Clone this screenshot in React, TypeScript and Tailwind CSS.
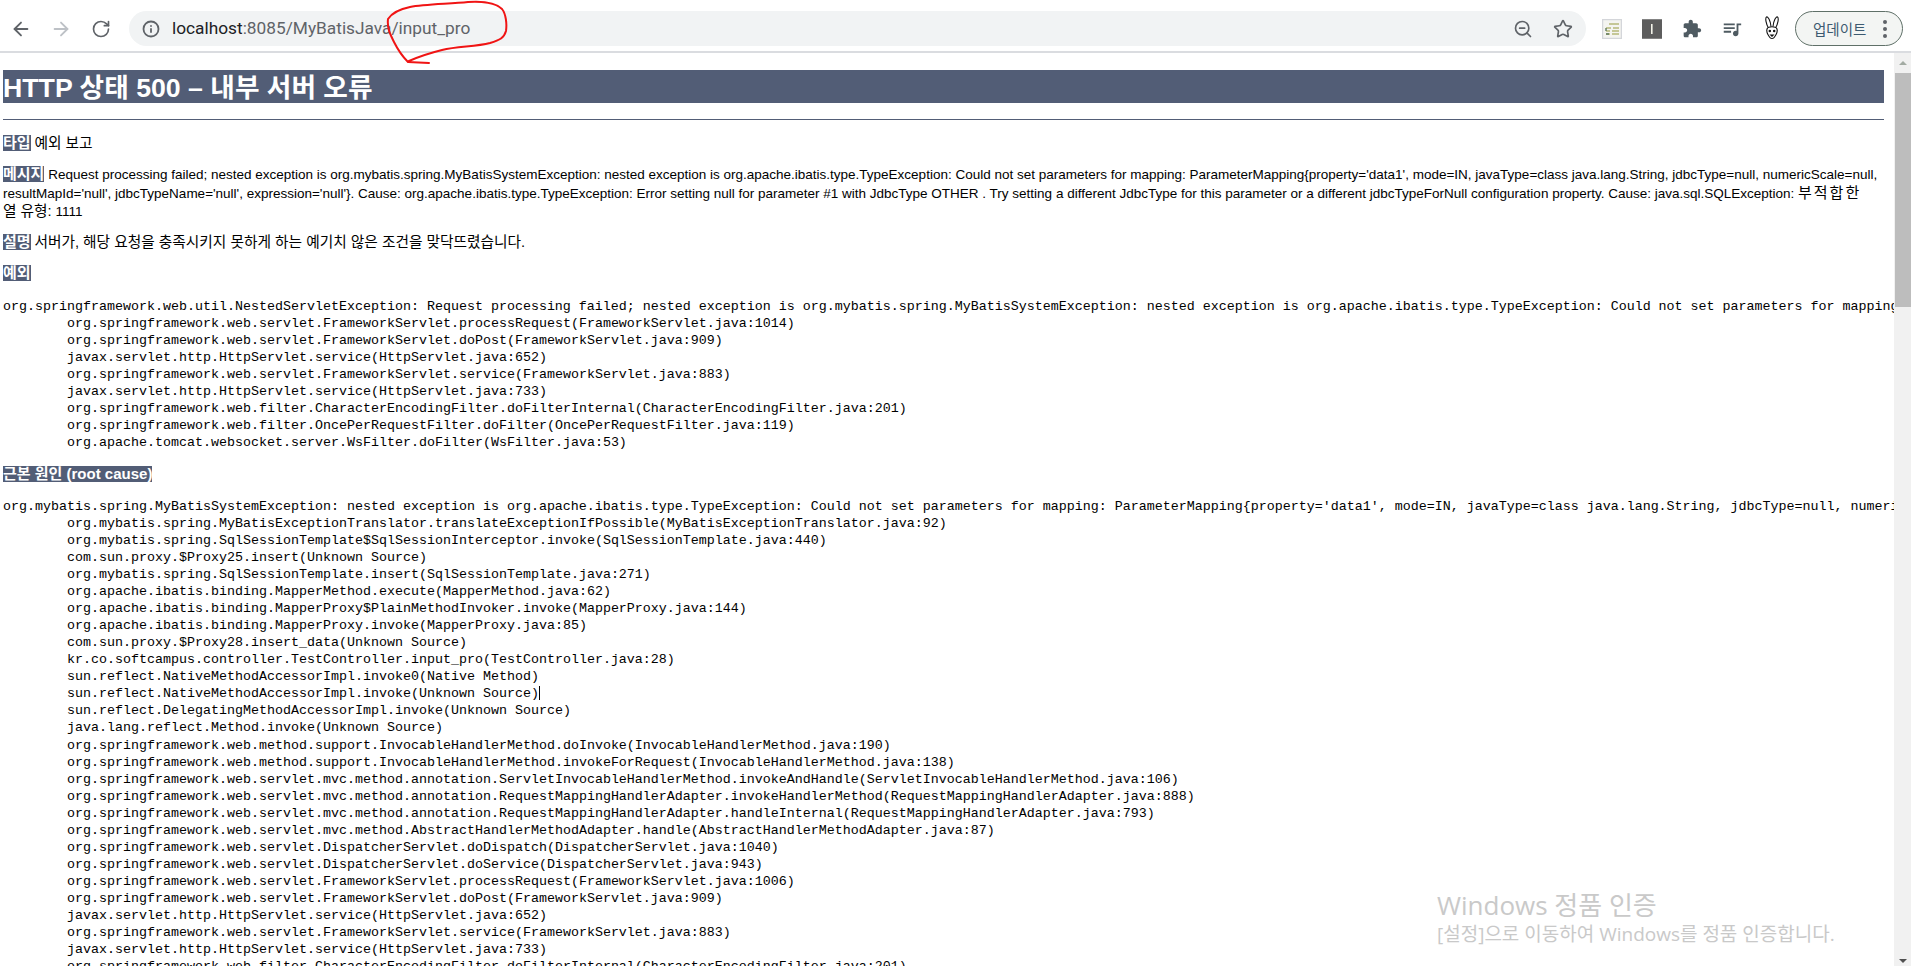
import React from 'react';
import { ArrowLeft, ArrowRight, Info, RotateCw, Star, ZoomOut } from 'lucide-react';

const TRACE_ONE = [
  'org.springframework.web.servlet.FrameworkServlet.processRequest(FrameworkServlet.java:1014)',
  'org.springframework.web.servlet.FrameworkServlet.doPost(FrameworkServlet.java:909)',
  'javax.servlet.http.HttpServlet.service(HttpServlet.java:652)',
  'org.springframework.web.servlet.FrameworkServlet.service(FrameworkServlet.java:883)',
  'javax.servlet.http.HttpServlet.service(HttpServlet.java:733)',
  'org.springframework.web.filter.CharacterEncodingFilter.doFilterInternal(CharacterEncodingFilter.java:201)',
  'org.springframework.web.filter.OncePerRequestFilter.doFilter(OncePerRequestFilter.java:119)',
  'org.apache.tomcat.websocket.server.WsFilter.doFilter(WsFilter.java:53)',
];

const TRACE_TWO = [
  'org.mybatis.spring.MyBatisExceptionTranslator.translateExceptionIfPossible(MyBatisExceptionTranslator.java:92)',
  'org.mybatis.spring.SqlSessionTemplate$SqlSessionInterceptor.invoke(SqlSessionTemplate.java:440)',
  'com.sun.proxy.$Proxy25.insert(Unknown Source)',
  'org.mybatis.spring.SqlSessionTemplate.insert(SqlSessionTemplate.java:271)',
  'org.apache.ibatis.binding.MapperMethod.execute(MapperMethod.java:62)',
  'org.apache.ibatis.binding.MapperProxy$PlainMethodInvoker.invoke(MapperProxy.java:144)',
  'org.apache.ibatis.binding.MapperProxy.invoke(MapperProxy.java:85)',
  'com.sun.proxy.$Proxy28.insert_data(Unknown Source)',
  'kr.co.softcampus.controller.TestController.input_pro(TestController.java:28)',
  'sun.reflect.NativeMethodAccessorImpl.invoke0(Native Method)',
  'sun.reflect.NativeMethodAccessorImpl.invoke(Unknown Source)',
  'sun.reflect.DelegatingMethodAccessorImpl.invoke(Unknown Source)',
  'java.lang.reflect.Method.invoke(Unknown Source)',
  'org.springframework.web.method.support.InvocableHandlerMethod.doInvoke(InvocableHandlerMethod.java:190)',
  'org.springframework.web.method.support.InvocableHandlerMethod.invokeForRequest(InvocableHandlerMethod.java:138)',
  'org.springframework.web.servlet.mvc.method.annotation.ServletInvocableHandlerMethod.invokeAndHandle(ServletInvocableHandlerMethod.java:106)',
  'org.springframework.web.servlet.mvc.method.annotation.RequestMappingHandlerAdapter.invokeHandlerMethod(RequestMappingHandlerAdapter.java:888)',
  'org.springframework.web.servlet.mvc.method.annotation.RequestMappingHandlerAdapter.handleInternal(RequestMappingHandlerAdapter.java:793)',
  'org.springframework.web.servlet.mvc.method.AbstractHandlerMethodAdapter.handle(AbstractHandlerMethodAdapter.java:87)',
  'org.springframework.web.servlet.DispatcherServlet.doDispatch(DispatcherServlet.java:1040)',
  'org.springframework.web.servlet.DispatcherServlet.doService(DispatcherServlet.java:943)',
  'org.springframework.web.servlet.FrameworkServlet.processRequest(FrameworkServlet.java:1006)',
  'org.springframework.web.servlet.FrameworkServlet.doPost(FrameworkServlet.java:909)',
  'javax.servlet.http.HttpServlet.service(HttpServlet.java:652)',
  'org.springframework.web.servlet.FrameworkServlet.service(FrameworkServlet.java:883)',
  'javax.servlet.http.HttpServlet.service(HttpServlet.java:733)',
  'org.springframework.web.filter.CharacterEncodingFilter.doFilterInternal(CharacterEncodingFilter.java:201)',
];

// Korean runs sit larger than the latin text around them; zero leading keeps the line height
const Ko = ({ children }: { children: React.ReactNode }) => <span className="text-[14.7px] leading-[0]">{children}</span>;

const Label = ({ children }: { children: React.ReactNode }) => (
  <b className="inline-block h-[16px] bg-[#525d76] text-[15px] font-bold leading-[16px] text-white">{children}</b>
);

const Trace = ({ head, lines, className }: { head: string; lines: string[]; className: string }) => (
  <pre
    className={`whitespace-pre font-['Liberation_Mono','Noto_Sans_CJK_KR',monospace] text-[13.33px] leading-[17.07px] text-black ${className}`}
  >
    <div>{head}</div>
    {lines.map((line, idx) => (
      <div key={idx} className="pl-[64px]">
        {line}
        {line.startsWith('sun.reflect.NativeMethodAccessorImpl.invoke(') && (
          <span className="inline-block h-[14px] w-px bg-black align-[-3px]" />
        )}
      </div>
    ))}
  </pre>
);

const Toolbar = () => (
  <header className="flex h-[53px] shrink-0 items-start border-b-2 border-[#dadce0] bg-white pt-[11px]">
    <div className="flex h-[35px] w-[129px] shrink-0 items-center pl-px">
      <span className="flex w-10 justify-center text-[#5f6368]"><ArrowLeft size={22} strokeWidth={2} /></span>
      <span className="flex w-10 justify-center text-[#bdc1c6]"><ArrowRight size={22} strokeWidth={2} /></span>
      <span className="flex w-10 justify-center text-[#5f6368]"><RotateCw size={20} strokeWidth={2} /></span>
    </div>
    <div className="flex h-[35px] flex-1 items-center rounded-full bg-[#f1f3f4] pl-[13px] pr-[3px]">
      <Info size={18} strokeWidth={2.4} className="shrink-0 text-[#5f6368]" />
      <span className="ml-3 flex-1 font-['Roboto',sans-serif] text-[17.3px] text-[#5f6368]">
        <span className="text-[#202124]">localhost</span>:8085/MyBatisJava/input_pro
      </span>
      <span className="flex w-10 justify-center text-[#5f6368]"><ZoomOut size={20} strokeWidth={2} /></span>
      <span className="flex w-10 justify-center text-[#5f6368]"><Star size={20} strokeWidth={2} /></span>
    </div>
    <div className="flex h-[35px] shrink-0 items-center pl-[6px] pr-2">
      <span className="flex w-10 justify-center">
        <svg width="20" height="20" viewBox="0 0 20 20">
          <rect x="0.5" y="0.5" width="19" height="19" fill="#f4f4f0" stroke="#d4d6da" strokeWidth="1.5" />
          <path d="M7 5h10M4 9h5M11 9h6M4 12h4M10 12h7M4 15h4M10 15h7" stroke="#b5b878" strokeWidth="1.4" />
          <path d="M4 9v3M4 15h3" stroke="#5f7a5f" strokeWidth="1.4" />
        </svg>
      </span>
      <span className="flex w-10 justify-center">
        <svg width="20" height="20" viewBox="0 0 20 20">
          <rect width="20" height="20" fill="#5d5d5d" />
          <path d="M0 0h20M0 20h20" stroke="#a9a9a9" strokeWidth="1" />
          <rect x="9" y="5" width="1.6" height="10" fill="#f2f2e8" />
        </svg>
      </span>
      <span className="flex w-10 justify-center text-[#4f5b62]">
        <svg width="20" height="20" viewBox="0 0 24 24" fill="currentColor">
          <path d="M20.5 11H19V7c0-1.1-.9-2-2-2h-4V3.5C13 2.12 11.88 1 10.5 1S8 2.12 8 3.5V5H4c-1.1 0-1.99.9-1.99 2v3.8H3.5c1.49 0 2.7 1.21 2.7 2.7s-1.21 2.7-2.7 2.7H2V20c0 1.1.9 2 2 2h3.8v-1.5c0-1.49 1.21-2.7 2.7-2.7 1.49 0 2.7 1.21 2.7 2.7V22H17c1.1 0 2-.9 2-2v-4h1.5c1.38 0 2.5-1.12 2.5-2.5S21.88 11 20.5 11z" />
        </svg>
      </span>
      <span className="flex w-10 justify-center text-[#4f5b62]">
        <svg width="22" height="22" viewBox="0 0 24 24" fill="currentColor">
          <path d="M15 6H3v2h12V6zm0 4H3v2h12v-2zM3 16h8v-2H3v2zM17 6v8.18c-.31-.11-.65-.18-1-.18-1.66 0-3 1.34-3 3s1.34 3 3 3 3-1.34 3-3V8h3V6h-5z" />
        </svg>
      </span>
      <span className="flex w-10 justify-center">
        <svg width="18" height="25" viewBox="0 0 18 25" fill="#fff" stroke="#111" strokeWidth="1.1">
          <path d="M5.5 12C3 8 2 2 3.5 1S7.5 5 8 10.5M12.5 12C15 8 16 2 14.5 1S10.5 5 10 10.5" />
          <path d="M4 13c1-3 9-3 10 0 1 3-1 6-2.5 8-1 2-4 2-5 0C5 19 3 16 4 13z" />
          <circle cx="6.8" cy="15" r="0.7" fill="#111" />
          <circle cx="11.2" cy="15" r="0.7" fill="#111" />
          <path d="M7.8 19h2.4l-1.2 1.2z" fill="#111" />
        </svg>
      </span>
      <div className="ml-[3px] flex h-[35px] w-[108px] items-center rounded-full border border-[#5f7068] bg-[#f3f5f3] pl-[17px] pr-[15px]">
        <span className="font-['Noto_Sans_CJK_KR',sans-serif] text-[14.5px] text-[#3c5a70]">업데이트</span>
        <span className="ml-auto flex flex-col gap-[3px]">
          <span className="h-1 w-1 rounded-full bg-[#5f6368]" />
          <span className="h-1 w-1 rounded-full bg-[#5f6368]" />
          <span className="h-1 w-1 rounded-full bg-[#5f6368]" />
        </span>
      </div>
    </div>
  </header>
);

const Scrollbar = () => (
  <aside className="flex w-[17px] shrink-0 flex-col bg-[#f1f1f1]">
    <div className="flex h-[20px] items-center justify-center">
      <span className="h-0 w-0 border-x-[4px] border-b-[4px] border-x-transparent border-b-[#a3aba3]" />
    </div>
    <div className="ml-px h-[234px] bg-[#bdbdbd]" />
    <div className="mt-auto flex h-[7px] items-start justify-center">
      <span className="h-0 w-0 border-x-[4px] border-t-[4px] border-x-transparent border-t-[#505050]" />
    </div>
  </aside>
);

export default function App() {
  return (
    <div className="relative flex h-screen flex-col overflow-hidden bg-white font-['Liberation_Sans','Noto_Sans_CJK_KR',sans-serif]">
      <Toolbar />
      <div className="flex min-h-0 flex-1">
        <main className="min-w-0 flex-1 overflow-hidden pl-[3px] pr-[10px] pt-[17px] text-[13.5px] leading-[18.3px] text-black">
          <h1 className="h-[33px] bg-[#525d76] text-[26.7px] font-bold leading-[36px] text-white">HTTP 상태 500 – 내부 서버 오류</h1>
          <hr className="mt-4 h-px border-0 bg-[#525d76]" />
          <p className="mt-[15px] whitespace-nowrap"><Label>타입</Label> <Ko>예외 보고</Ko></p>
          <p className="mt-[13px] whitespace-nowrap">
            <Label>메시지</Label> Request processing failed; nested exception is org.mybatis.spring.MyBatisSystemException: nested exception is org.apache.ibatis.type.TypeException: Could not set parameters for mapping: ParameterMapping{"{"}property='data1', mode=IN, javaType=class java.lang.String, jdbcType=null, numericScale=null,
            <br />
            resultMapId='null', jdbcTypeName='null', expression='null'{"}"}. Cause: org.apache.ibatis.type.TypeException: Error setting null for parameter #1 with JdbcType OTHER . Try setting a different JdbcType for this parameter or a different jdbcTypeForNull configuration property. Cause: java.sql.SQLException: <span className="text-[15px] leading-[0] tracking-[2px]">부적합한</span>
            <br />
            <Ko>열 유형:</Ko> 1111
          </p>
          <p className="mt-[13px] whitespace-nowrap"><Label>설명</Label> <Ko>서버가, 해당 요청을 충족시키지 못하게 하는 예기치 않은 조건을 맞닥뜨렸습니다.</Ko></p>
          <p className="mt-[13px] whitespace-nowrap"><Label>예외</Label></p>
          <Trace
            className="mt-[14px]"
            head="org.springframework.web.util.NestedServletException: Request processing failed; nested exception is org.mybatis.spring.MyBatisSystemException: nested exception is org.apache.ibatis.type.TypeException: Could not set parameters for mapping: ParameterMapping{property='data1', mode=IN, javaType=class java.lang.String, jdbcType=null, numericScale=null}"
            lines={TRACE_ONE}
          />
          <p className="mt-[15px] whitespace-nowrap"><Label>근본 원인 (root cause)</Label></p>
          <Trace
            className="mt-[13px]"
            head="org.mybatis.spring.MyBatisSystemException: nested exception is org.apache.ibatis.type.TypeException: Could not set parameters for mapping: ParameterMapping{property='data1', mode=IN, javaType=class java.lang.String, jdbcType=null, numericScale=null, resultMapId='null'}"
            lines={TRACE_TWO}
          />
        </main>
        <Scrollbar />
      </div>

      {/* pen mark around the route in the address bar */}
      <svg className="pointer-events-none absolute left-[380px] top-0" width="135" height="70" viewBox="380 0 135 70" fill="none" stroke="#f01414" strokeWidth="2" strokeLinecap="round" strokeLinejoin="round">
        <path d="M429 63 L408 62 C402 56 398 50 394 42 C390 34 387 28 388 19 C392 13 400 9 410 7 C425 4 450 4 468 2 C482 1 496 3 502 9 C506 14 507 24 506 31 C504 38 500 40 490 43 C475 47 458 46 442 50 C430 53 418 57 409 61" />
      </svg>

      {/* windows activation watermark */}
      <div className="pointer-events-none absolute left-[1437px] top-[889px] font-['Open_Sans','Noto_Sans_CJK_KR',sans-serif] text-[#c9c9c9]">
        <div className="text-[26px] leading-[32px]">Windows 정품 인증</div>
        <div className="text-[19px] leading-[26px]">[설정]으로 이동하여 Windows를 정품 인증합니다.</div>
      </div>
    </div>
  );
}
